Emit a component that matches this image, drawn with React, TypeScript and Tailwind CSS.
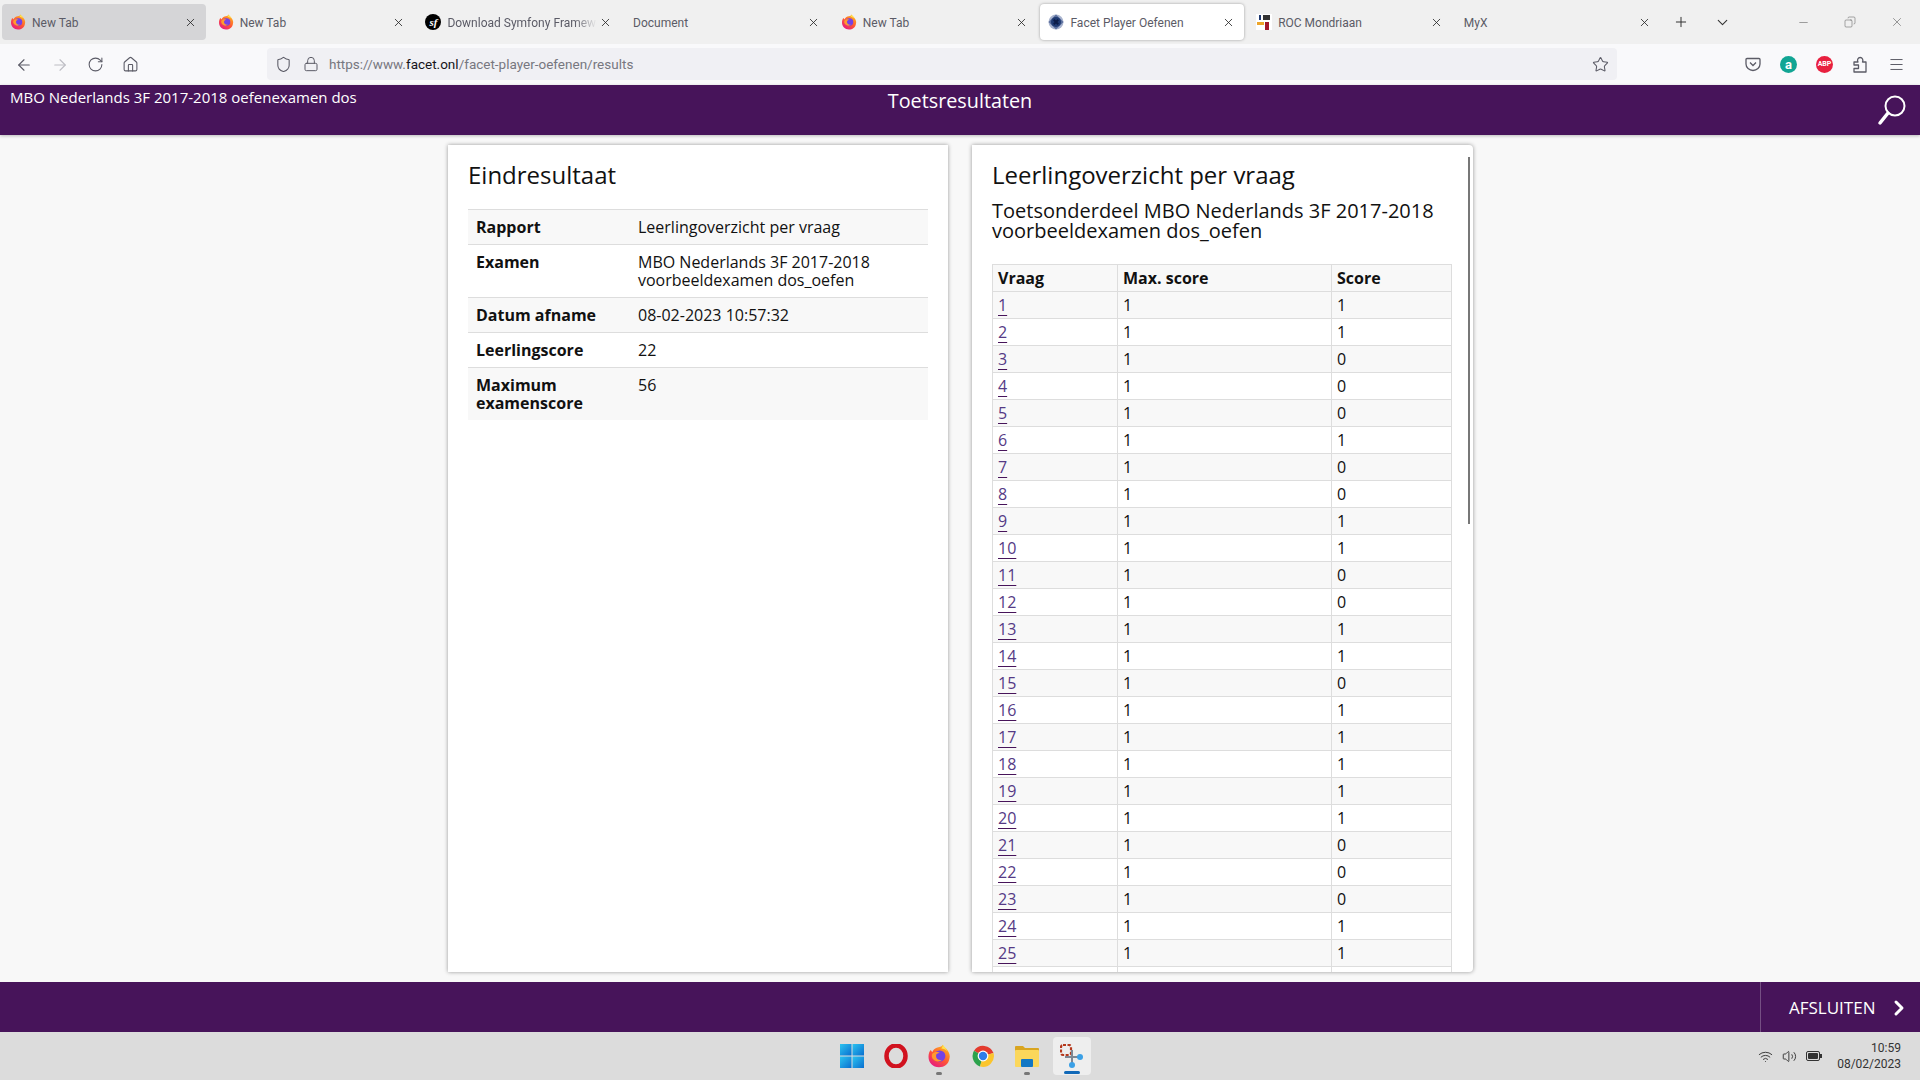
import React from 'react';
import {
  ArrowLeft, ArrowRight, RotateCw, Home, Shield, Lock, Star, X, Plus, ChevronDown,
  Minus, Copy, Menu, Wifi, Volume2, ChevronRight,
} from 'lucide-react';

const Firefox: React.FC<{ size: number }> = ({ size }) => (
  <svg width={size} height={size} viewBox="0 0 32 32" className="shrink-0">
    <defs>
      <linearGradient id="ffBody" x1="0.8" y1="0.1" x2="0.2" y2="1">
        <stop offset="0" stopColor="#ffb01f" />
        <stop offset="0.5" stopColor="#ff5634" />
        <stop offset="1" stopColor="#e31587" />
      </linearGradient>
    </defs>
    <path d="M21 1c1 3 4 4 6 7 3 4 4 8 3 11-1 8-7 12-14 12C8 31 2 25 2 17c0-4 1-7 3-9l2 3c1-3 3-5 6-6 3-1 7-1 8-4z" fill="url(#ffBody)" />
    <circle cx="17" cy="16" r="7.5" fill="#7542e5" />
    <path d="M7 13c3-3 8-3 10-1-3 0-5 1-5 4 0 4 4 6 8 5-3 3-8 3-11 0-3-2-3-6-2-8z" fill="#ff9a2e" />
    <path d="M21 1c2 3 5 5 6 9-2-3-5-4-8-4 1-1 2-3 2-5z" fill="#ffe14d" />
  </svg>
);

const Symfony = () => (
  <span className="w-[16px] h-[16px] rounded-full bg-black text-white flex items-center justify-center shrink-0 text-[11px] italic font-bold font-['Liberation_Serif',serif]">
    sf
  </span>
);

const Facet = () => (
  <svg width="16" height="16" viewBox="0 0 16 16" className="shrink-0">
    <circle cx="8" cy="8" r="7.5" fill="#a9b4cf" />
    <path d="M8 0.5l7.5 7.5-7.5 7.5-7.5-7.5z" fill="#5a6f9e" />
    <circle cx="8" cy="8" r="5" fill="#1f3a72" />
    <path d="M5.8 5.8l4.4 4.4M10.2 5.8l-4.4 4.4" stroke="#0c1c48" strokeWidth="2" />
  </svg>
);

const Roc = () => (
  <svg width="16" height="16" viewBox="0 0 16 16" className="shrink-0">
    <rect width="16" height="16" fill="#fff" />
    <rect x="3" y="1" width="2" height="5" fill="#1f3a72" />
    <rect x="7" y="1" width="7" height="5" fill="#333" />
    <rect x="1" y="8" width="7" height="3" fill="#eda52a" />
    <rect x="9" y="8" width="4" height="8" fill="#a3172b" />
  </svg>
);

const tabs: { title: string; icon?: React.ReactNode; active?: boolean; hover?: boolean; fade?: boolean }[] = [
  { title: 'New Tab', icon: <Firefox size={16} />, hover: true },
  { title: 'New Tab', icon: <Firefox size={16} /> },
  { title: 'Download Symfony Framework', icon: <Symfony />, fade: true },
  { title: 'Document' },
  { title: 'New Tab', icon: <Firefox size={16} /> },
  { title: 'Facet Player Oefenen', icon: <Facet />, active: true },
  { title: 'ROC Mondriaan', icon: <Roc /> },
  { title: 'MyX' },
];

const scores = [1, 1, 0, 0, 0, 1, 0, 0, 1, 1, 0, 0, 1, 1, 0, 1, 1, 1, 1, 1, 0, 0, 0, 1, 1];

const summary: [React.ReactNode, React.ReactNode][] = [
  ['Rapport', 'Leerlingoverzicht per vraag'],
  ['Examen', <>MBO Nederlands 3F 2017-2018<br />voorbeeldexamen dos_oefen</>],
  ['Datum afname', '08-02-2023 10:57:32'],
  ['Leerlingscore', '22'],
  [<>Maximum<br />examenscore</>, '56'],
];

const BrowserChrome = () => (
  <div className="font-['Roboto',sans-serif]">
    {/* Tabs */}
    <div className="h-[44px] bg-[#f0f0f0] flex items-center pl-[2px] gap-[3.7px] text-[12px] text-[#5b5b66]">
      {tabs.map((t, i) => (
        <div
          key={i}
          className={`w-[204px] h-[36px] rounded-[4px] pl-[8px] pr-[9px] flex items-center shrink-0 ${
            t.active ? 'bg-white shadow-[0_0_3px_rgba(0,0,0,0.35)]' : t.hover ? 'bg-[#d5d5d7]' : ''
          }`}
        >
          {t.icon && <span className="mr-[6px] flex">{t.icon}</span>}
          <span
            className={`flex-1 overflow-hidden whitespace-nowrap pt-[1px] ${
              t.fade ? '[mask-image:linear-gradient(to_right,black_85%,transparent)]' : ''
            }`}
          >
            {t.title}
          </span>
          <X size={13} strokeWidth={1.5} className="text-[#222] shrink-0 ml-[2px]" />
        </div>
      ))}
      <Plus size={16} strokeWidth={1.5} className="text-[#333] ml-[9px]" />
      <ChevronDown size={17} strokeWidth={1.5} className="text-[#333] ml-[22px]" />
      <div className="flex-1 flex justify-end items-center gap-[34px] pr-[16px] text-[#555]">
        <Minus size={13} strokeWidth={1} />
        <Copy size={12} strokeWidth={1} className="-scale-x-100" />
        <X size={14} strokeWidth={1} />
      </div>
    </div>

    {/* Toolbar */}
    <div className="h-[41px] bg-[#f9f9fb] flex items-start pt-[4px] text-[#5b5b66]">
      <div className="w-[267px] h-[33px] flex items-center pl-[15px] gap-[18px]">
        <ArrowLeft size={18} strokeWidth={1.5} />
        <ArrowRight size={18} strokeWidth={1.5} className="text-[#bdbdc4]" />
        <RotateCw size={17} strokeWidth={1.5} />
        <Home size={17} strokeWidth={1.5} />
      </div>
      <div className="w-[1350px] h-[32px] rounded-[4px] bg-[#f0f0f4] flex items-center pl-[8px] pr-[8px]">
        <Shield size={17} strokeWidth={1.5} />
        <Lock size={16} strokeWidth={1.5} className="ml-[11px]" />
        <span className="ml-[10px] pt-[1px] text-[13.5px] text-[#77777f]">
          https://www.<span className="text-[#15141a]">facet.onl</span>/facet-player-oefenen/results
        </span>
        <Star size={17} strokeWidth={1.5} className="ml-auto" />
      </div>
      <div className="flex-1 h-[32px] flex items-center justify-end pr-[15px] gap-[19px]">
        <svg width="16" height="16" viewBox="0 0 16 16" fill="none" stroke="#5b5b66" strokeWidth="1.3">
          <path d="M2 2.5h12a1 1 0 0 1 1 1V8a7 6.5 0 0 1-14 0V3.5a1 1 0 0 1 1-1z" />
          <path d="M5 6.5l3 3 3-3" />
        </svg>
        <span className="w-[17px] h-[17px] rounded-full bg-[#12a594] text-white text-[13px] font-bold flex items-center justify-center leading-none">a</span>
        <span className="w-[17px] h-[17px] rounded-full bg-[#e8203f] text-white text-[7px] font-bold flex items-center justify-center leading-none">ABP</span>
        <svg width="17" height="17" viewBox="0 0 17 17" fill="none" stroke="#5b5b66" strokeWidth="1.3" strokeLinejoin="round">
          <path d="M2 6h4c-1.2-2 0-4.5 2.2-4.5S11.5 4 10.5 6H14v10H2v-3.5h4.5V9H2z" />
        </svg>
        <Menu size={17} strokeWidth={1.4} />
      </div>
    </div>
  </div>
);

const Taskbar = () => (
  <div className="h-[48px] bg-[#dcdcdc] flex items-center relative font-['Roboto',sans-serif]">
    <div className="flex-1" />
    <div className="flex items-center pl-[29px] h-full">
      <svg width="24" height="24" viewBox="0 0 24 24" className="mr-[20px]">
        <defs>
          <linearGradient id="winBlue" x1="0" y1="0" x2="1" y2="1">
            <stop offset="0" stopColor="#2bc3f0" />
            <stop offset="1" stopColor="#0a6fd0" />
          </linearGradient>
        </defs>
        <rect x="0" y="0" width="11.5" height="11.5" fill="url(#winBlue)" />
        <rect x="12.5" y="0" width="11.5" height="11.5" fill="url(#winBlue)" />
        <rect x="0" y="12.5" width="11.5" height="11.5" fill="url(#winBlue)" />
        <rect x="12.5" y="12.5" width="11.5" height="11.5" fill="url(#winBlue)" />
      </svg>
      <svg width="24" height="24" viewBox="0 0 24 24" className="mr-[19px]">
        <ellipse cx="12" cy="12" rx="9.5" ry="10.5" fill="none" stroke="#d1121f" strokeWidth="4.5" />
      </svg>
      <div className="relative mr-[20px] flex">
        <Firefox size={24} />
        <span className="absolute left-[9px] top-[28px] w-[6px] h-[3px] rounded-full bg-[#777]" />
      </div>
      <svg width="24" height="24" viewBox="0 0 24 24" className="mr-[20px]">
        <path d="M12 12L3 6.8A11 11 0 0 1 22.5 9z" fill="#e33b2e" />
        <path d="M12 12l-9-5.2A11 11 0 0 0 9 22.6z" fill="#2ca24c" />
        <path d="M12 12l10.5-3A11 11 0 0 1 9 22.6z" fill="#fbc52d" />
        <circle cx="12" cy="12" r="5.4" fill="#fff" />
        <circle cx="12" cy="12" r="4.2" fill="#2f7de9" />
      </svg>
      <div className="relative mr-[14px] flex">
        <svg width="24" height="22" viewBox="0 0 24 22">
          <path d="M0 2a1 1 0 0 1 1-1h7l2 2h13a1 1 0 0 1 1 1v4H0z" fill="#d9a520" />
          <rect x="0" y="5" width="24" height="17" rx="1" fill="#fbd75b" />
          <rect x="6" y="14" width="12" height="8" rx="1" fill="#1277c4" />
        </svg>
        <span className="absolute left-[9px] top-[27px] w-[6px] h-[3px] rounded-full bg-[#777]" />
      </div>
      <div className="relative w-[38px] h-[38px] rounded-[4px] bg-[#eeeeee] flex items-center justify-center">
        <svg width="24" height="24" viewBox="0 0 24 24">
          <rect x="1" y="1" width="10" height="10" rx="2" fill="none" stroke="#b5391d" strokeWidth="2.2" strokeDasharray="3 1.5" />
          <path d="M12 6v14M5 13h16" stroke="#7d8794" strokeWidth="2" />
          <circle cx="20" cy="13" r="3" fill="#3ba0e6" />
          <circle cx="12" cy="21" r="3" fill="#3ba0e6" />
        </svg>
        <span className="absolute left-[11px] bottom-[1px] w-[16px] h-[3px] rounded-full bg-[#1169b8]" />
      </div>
    </div>
    <div className="flex-1 flex justify-end items-center pr-[19px] text-[#333]">
      <Wifi size={15} strokeWidth={1.5} className="mr-[9px]" />
      <Volume2 size={15} strokeWidth={1.5} className="mr-[9px]" />
      <span className="w-[14px] h-[10px] rounded-[2px] border border-[#333] p-[1px] flex mr-[17px] relative">
        <span className="flex-1 bg-[#333] rounded-[1px]" />
        <span className="absolute -right-[3px] top-[2px] w-[2px] h-[4px] bg-[#333]" />
      </span>
      <div className="text-[12px] leading-[16px] text-right">
        <div>10:59</div>
        <div>08/02/2023</div>
      </div>
    </div>
  </div>
);

export default function App() {
  return (
    <div className="w-[1920px] h-[1080px] overflow-hidden flex flex-col bg-[#f8f8f8] font-['Open_Sans',sans-serif] text-[#111]">
      <BrowserChrome />

      {/* Page header */}
      <div className="h-[50px] bg-[#47145a] text-white flex relative shrink-0 shadow-[0_1px_3px_rgba(0,0,0,0.25)] z-10">
        <div className="flex-1 pl-[10px] pt-[1px] text-[15px] leading-[22px]">MBO Nederlands 3F 2017-2018 oefenexamen dos</div>
        <div className="absolute left-0 right-0 top-[1px] text-center text-[19.8px] leading-[30px] pointer-events-none">Toetsresultaten</div>
        <div className="pr-[13px] pt-[9px]">
          <svg width="30" height="32" viewBox="0 0 30 32" fill="none" stroke="#fff">
            <circle cx="18" cy="12" r="9.5" strokeWidth="2" />
            <path d="M11 19L3 29" strokeWidth="3.5" strokeLinecap="round" />
          </svg>
        </div>
      </div>

      {/* Content */}
      <div className="flex-1 min-h-0 flex justify-center gap-[24px] py-[10px] pl-[1px]">
        <section className="w-[500px] bg-white shadow-[0_0_4px_rgba(0,0,0,0.4)] px-[20px] pt-[15px]">
          <h2 className="text-[24px] leading-[30px]">Eindresultaat</h2>
          <table className="mt-[19px] w-full border-collapse text-[16px] leading-[18px]">
            <tbody>
              {summary.map(([k, v], i) => (
                <tr key={i} className={`border-t border-[#ddd] ${i % 2 === 0 ? 'bg-[#f8f8f8]' : ''}`}>
                  <th className="w-[162px] px-[8px] py-[8px] text-left align-top font-bold">{k}</th>
                  <td className="px-[8px] py-[8px] align-top">{v}</td>
                </tr>
              ))}
            </tbody>
          </table>
        </section>

        <section className="w-[501px] bg-white rounded-tr-[4px] rounded-br-[4px] shadow-[0_0_4px_rgba(0,0,0,0.4)] pl-[20px] pr-[21px] pt-[15px] relative overflow-hidden">
          <h2 className="text-[24px] leading-[30px]">Leerlingoverzicht per vraag</h2>
          <h3 className="mt-[11px] text-[20px] leading-[20px]">
            Toetsonderdeel MBO Nederlands 3F 2017-2018<br />voorbeeldexamen dos_oefen
          </h3>
          <table className="mt-[23px] w-[459px] table-fixed border-collapse text-[16px] leading-[22px]">
            <colgroup>
              <col className="w-[125px]" />
              <col className="w-[214px]" />
              <col className="w-[120px]" />
            </colgroup>
            <thead>
              <tr className="bg-[#f8f8f8] h-[27px]">
                <th className="border border-[#ddd] px-[5px] py-[2px] text-left font-bold">Vraag</th>
                <th className="border border-[#ddd] px-[5px] py-[2px] text-left font-bold">Max. score</th>
                <th className="border border-[#ddd] px-[5px] py-[2px] text-left font-bold">Score</th>
              </tr>
            </thead>
            <tbody>
              {scores.map((s, i) => (
                <tr key={i} className={`h-[27px] ${i % 2 === 0 ? 'bg-[#f8f8f8]' : ''}`}>
                  <td className="border border-[#ddd] px-[5px] py-[2px]">
                    <a href="#" className="text-[#553a85] underline underline-offset-[4px] decoration-[#47145a]">{i + 1}</a>
                  </td>
                  <td className="border border-[#ddd] px-[5px] py-[2px]">1</td>
                  <td className="border border-[#ddd] px-[5px] py-[2px]">{s}</td>
                </tr>
              ))}
              <tr className="h-[27px]">
                <td className="border border-[#ddd]" />
                <td className="border border-[#ddd]" />
                <td className="border border-[#ddd]" />
              </tr>
            </tbody>
          </table>
          {/* overlay scrollbar */}
          <div className="absolute right-[3px] top-[12px] w-[2px] h-[367px] bg-[#777]" />
        </section>
      </div>

      {/* Page footer */}
      <div className="h-[50px] bg-[#47145a] text-white flex justify-end shrink-0">
        <div className="w-[160px] border-l border-white/25 flex items-center pl-[28px] pt-[1px] text-[17px]">
          AFSLUITEN
          <ChevronRight size={24} strokeWidth={3} className="ml-[12px]" />
        </div>
      </div>

      <Taskbar />
    </div>
  );
}
